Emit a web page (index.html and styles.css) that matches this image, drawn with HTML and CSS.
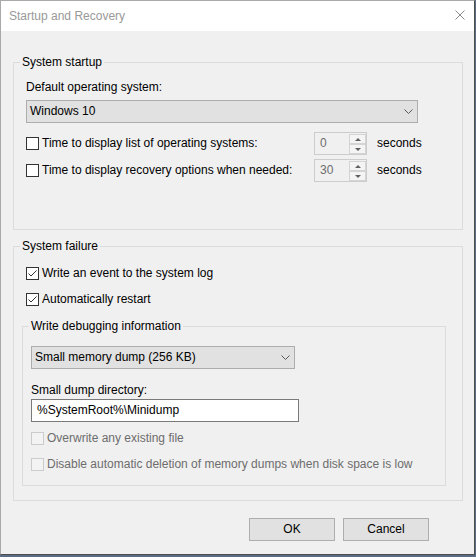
FILE: index.html
```html
<!DOCTYPE html>
<html>
<head>
<meta charset="utf-8">
<link rel="stylesheet" href="styles.css">
</head>
<body>
<div class="window">
  <div class="titlebar">
    <span class="title">Startup and Recovery</span>
    <svg class="close" width="10" height="10" viewBox="0 0 10 10"><path d="M0.5 0.5 L9.5 9.5 M9.5 0.5 L0.5 9.5" stroke="#8a8a8a" stroke-width="1" fill="none"/></svg>
  </div>
  <div class="content">
    <div class="group g1">
      <div class="group-title">System startup</div>
      <div class="label ind l-default">Default operating system:</div>
      <div class="select ind s1">
        <span>Windows 10</span>
        <svg class="chev" width="9" height="5" viewBox="0 0 9 5"><path d="M0.5 0.5 L4.5 4.5 L8.5 0.5" stroke="#5a5a5a" stroke-width="1" fill="none"/></svg>
      </div>
      <div class="srow ind r1">
        <span class="cb"></span>
        <span class="srow-label">Time to display list of operating systems:</span>
        <div class="spin">
          <span class="spin-val">0</span>
          <div class="spin-btns"><div class="spin-btn"><span class="tri-up"></span></div><div class="spin-btn"><span class="tri-down"></span></div></div>
        </div>
        <span class="unit">seconds</span>
      </div>
      <div class="srow ind r2">
        <span class="cb"></span>
        <span class="srow-label">Time to display recovery options when needed:</span>
        <div class="spin">
          <span class="spin-val">30</span>
          <div class="spin-btns"><div class="spin-btn"><span class="tri-up"></span></div><div class="spin-btn"><span class="tri-down"></span></div></div>
        </div>
        <span class="unit">seconds</span>
      </div>
    </div>

    <div class="group g2">
      <div class="group-title">System failure</div>
      <div class="crow ind c1">
        <svg class="cbx" width="13" height="13" viewBox="0 0 13 13"><rect x="0.5" y="0.5" width="12" height="12" fill="#fff" stroke="#333"/><path d="M2.5 6.5 L5 9 L10.5 3.5" stroke="#333" stroke-width="1" fill="none"/></svg>
        <span>Write an event to the system log</span>
      </div>
      <div class="crow ind c2">
        <svg class="cbx" width="13" height="13" viewBox="0 0 13 13"><rect x="0.5" y="0.5" width="12" height="12" fill="#fff" stroke="#333"/><path d="M2.5 6.5 L5 9 L10.5 3.5" stroke="#333" stroke-width="1" fill="none"/></svg>
        <span>Automatically restart</span>
      </div>

      <div class="group g3">
        <div class="group-title">Write debugging information</div>
        <div class="select ind2 s2">
          <span>Small memory dump (256 KB)</span>
          <svg class="chev" width="9" height="5" viewBox="0 0 9 5"><path d="M0.5 0.5 L4.5 4.5 L8.5 0.5" stroke="#5a5a5a" stroke-width="1" fill="none"/></svg>
        </div>
        <div class="label ind2 l-dir">Small dump directory:</div>
        <div class="textbox ind2">%SystemRoot%\Minidump</div>
        <div class="crow ind2 disabled d1">
          <span class="cb cb-dis"></span>
          <span>Overwrite any existing file</span>
        </div>
        <div class="crow ind2 disabled d2">
          <span class="cb cb-dis"></span>
          <span>Disable automatic deletion of memory dumps when disk space is low</span>
        </div>
      </div>
    </div>

    <div class="buttons">
      <div class="btn">OK</div>
      <div class="btn">Cancel</div>
    </div>
  </div>
</div>
</body>
</html>
```

FILE: styles.css
```css
* { box-sizing: border-box; }

body {
  margin: 0;
  background: #5d6c86;
  font-family: "Liberation Sans", Arial, sans-serif;
  font-size: 12px;
  line-height: 15px;
  color: #000;
}

.window {
  width: 475px;
  height: 555px;
  background: #f0f0f0;
  border: 1px solid #a9a9a9;
  border-right-color: #4d4d4d;
  border-bottom-color: #4d4d4d;
  display: flex;
  flex-direction: column;
}

.titlebar {
  height: 30px;
  flex: none;
  background: #fff;
  display: flex;
  align-items: center;
  padding-left: 8px;
  color: #999;
}

.title { flex: 1; }

.close {
  align-self: flex-start;
  margin-top: 9px;
  margin-right: 9px;
}

.content {
  padding: 31px 11px 0 12px;
}

.group {
  border: 1px solid #dcdcdc;
}

.group-title {
  margin: -8px 0 0 6px;
  padding: 0 2px;
  background: #f0f0f0;
  width: fit-content;
}

.ind { margin-left: 12px; }
.ind2 { margin-left: 8px; }

.g1 { padding-bottom: 47px; }
.l-default { margin-top: 10px; }
.s1 { margin-top: 5px; width: 392px; }
.r1 { margin-top: 9px; }
.r2 { margin-top: 4px; }

.select {
  height: 23px;
  border: 1px solid #adadad;
  background: #e1e1e1;
  display: flex;
  align-items: center;
  justify-content: space-between;
  padding: 0 4px 0 3px;
}

.chev { display: block; }

.srow {
  height: 23px;
  display: flex;
  align-items: center;
}

.cb {
  width: 13px;
  height: 13px;
  flex: none;
  border: 1px solid #333;
  background: #fff;
  margin-right: 3px;
}

.cbx {
  display: block;
  flex: none;
  margin-right: 3px;
}

.cb-dis {
  border-color: #cccccc;
  background: #f3f3f3;
}

.srow-label {
  width: 272px;
  flex: none;
}

.spin {
  width: 53px;
  height: 23px;
  border: 1px solid #cccccc;
  background: #f0f0f0;
  display: flex;
  align-items: center;
  padding-left: 5px;
  color: #6d6d6d;
}

.spin-val { flex: 1; }

.spin-btns {
  width: 17px;
  height: 100%;
  display: flex;
  flex-direction: column;
  padding: 1px 0 0 0;
}

.spin-btn {
  flex: 1;
  border: 1px solid #d4d4d4;
  background: #f4f4f4;
  display: flex;
  align-items: center;
  justify-content: center;
}

.tri-up {
  width: 0;
  height: 0;
  border-left: 3px solid transparent;
  border-right: 3px solid transparent;
  border-bottom: 3px solid #606060;
}

.tri-down {
  width: 0;
  height: 0;
  border-left: 3px solid transparent;
  border-right: 3px solid transparent;
  border-top: 3px solid #606060;
}

.unit { margin-left: 10px; }

.g2 {
  margin-top: 16px;
  padding-bottom: 14px;
}

.crow {
  height: 15px;
  display: flex;
  align-items: center;
}

.c1 { margin-top: 12px; }
.c2 { margin-top: 11px; }

.g3 {
  margin: 19px 16px 0 8px;
  padding-bottom: 13px;
}

.s2 { margin-top: 12px; width: 264px; }
.l-dir { margin-top: 14px; }

.textbox {
  margin-top: 1px;
  width: 268px;
  height: 23px;
  border: 1px solid #7a7a7a;
  background: #fff;
  padding-left: 5px;
  display: flex;
  align-items: center;
}

.disabled { color: #6d6d6d; }
.d1 { margin-top: 9px; }
.d2 { margin-top: 11px; }

.buttons {
  margin-top: 17px;
  display: flex;
  justify-content: flex-end;
  gap: 8px;
  padding-right: 34px;
}

.btn {
  width: 86px;
  height: 23px;
  border: 1px solid #adadad;
  background: #e1e1e1;
  display: flex;
  align-items: center;
  justify-content: center;
}
```
